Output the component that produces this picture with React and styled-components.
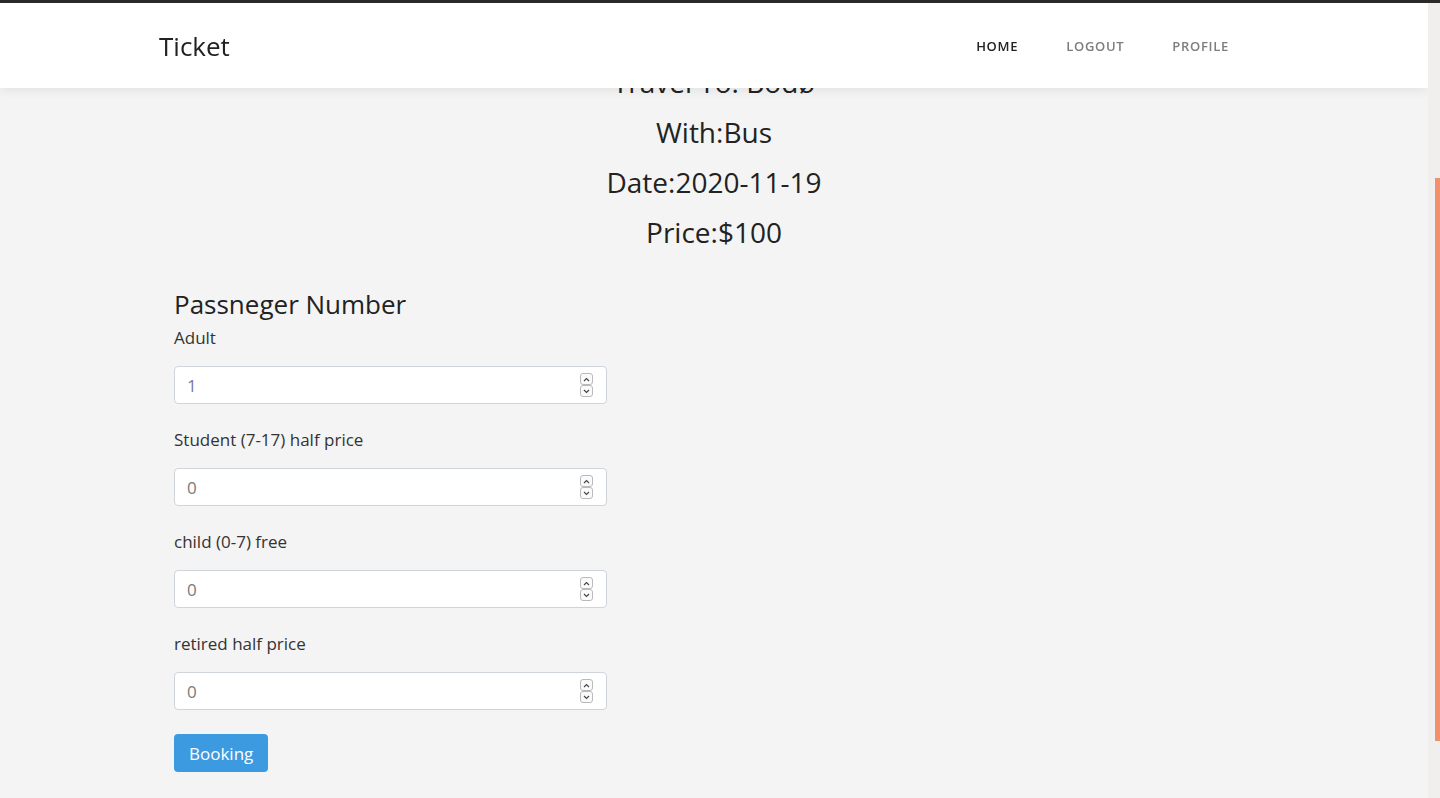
import React, { useLayoutEffect, useRef } from 'react';
import styled, { createGlobalStyle } from 'styled-components';

const FONT = '"Open Sans", "DejaVu Sans", sans-serif';

const GlobalStyle = createGlobalStyle`
    html, body {
        margin: 0;
        padding: 0;
        height: 100%;
        overflow: hidden;
        font-family: ${FONT};
        color: #222;
    }
    * { box-sizing: border-box; }
`;

const Shell = styled.div`
    height: 100vh;
    display: flex;
    flex-direction: column;
`;

const TopStrip = styled.div`
    height: 3px;
    flex: none;
    background: #2a2a2a;
`;

const Body = styled.div`
    flex: 1;
    min-height: 0;
    display: flex;
`;

const Scroller = styled.div`
    flex: 1;
    overflow: hidden;
    background: #f4f4f4;
`;

const ScrollRail = styled.div`
    width: 12px;
    flex: none;
    background: #f0efee;
    display: flex;
    justify-content: flex-end;
`;

const ScrollThumb = styled.div`
    width: 5px;
    margin-top: ${p => p.$top}px;
    height: ${p => p.$size}px;
    background: #f2906b;
`;

const Navbar = styled.header`
    position: sticky;
    top: 0;
    z-index: 5;
    height: 85px;
    background: #fff;
    box-shadow: 0 3px 10px rgba(0, 0, 0, 0.07);
`;

const Container = styled.div`
    width: 1140px;
    margin: 0 auto;
    padding: 0 15px;
    height: 100%;
`;

const NavInner = styled(Container)`
    display: flex;
    align-items: center;
    justify-content: space-between;
`;

const Brand = styled.a`
    font-size: 26px;
    color: #222;
    text-decoration: none;
    line-height: 1;
`;

const NavList = styled.nav`
    display: flex;
    gap: 48px;
    margin-right: 40px;
`;

const NavLink = styled.a`
    font-size: 13px;
    font-weight: 600;
    letter-spacing: 0.7px;
    text-transform: uppercase;
    text-decoration: none;
    color: ${p => (p.$active ? '#222' : '#7d7d7d')};
`;

const Main = styled.main`
    padding: 216px 0 107px;
`;

const Summary = styled.div`
    text-align: center;
`;

const SummaryLine = styled.div`
    font-size: 28px;
    line-height: 50px;
    color: #222;
`;

const Form = styled.form`
    margin: 32px 0 0 15px;
    width: 433px;
    display: flex;
    flex-direction: column;
`;

const Heading = styled.h4`
    margin: 0 0 7px;
    font-size: 26px;
    font-weight: 400;
    line-height: 30px;
`;

const Field = styled.div`
    display: flex;
    flex-direction: column;
    gap: 16px;
    margin-bottom: 24px;
`;

const Label = styled.label`
    font-size: 17px;
    line-height: 24px;
    color: #333;
`;

const InputBox = styled.div`
    height: 38px;
    display: flex;
    align-items: center;
    background: #fff;
    border: 1px solid #ced4da;
    border-radius: 4px;
    padding: 0 13px 0 12px;
`;

const NumberInput = styled.input`
    flex: 1;
    border: 0;
    outline: none;
    background: transparent;
    font-family: ${FONT};
    font-size: 17px;
    padding: 0;
    color: ${p => (p.$tint ? '#7676ad' : '#7a7a7a')};
    appearance: textfield;
    -moz-appearance: textfield;

    &::-webkit-inner-spin-button,
    &::-webkit-outer-spin-button {
        -webkit-appearance: none;
        margin: 0;
    }
`;

const Spinner = styled.div`
    display: flex;
    flex-direction: column;
    width: 13px;
`;

const SpinBtn = styled.span`
    height: 12px;
    display: flex;
    align-items: center;
    justify-content: center;
    border: 1px solid #b9b9b9;
    border-radius: 3px;
    background: #fafafa;
`;

const BookingButton = styled.button`
    align-self: flex-start;
    height: 38px;
    padding: 0 15px;
    border: 0;
    border-radius: 4px;
    background: #3c9ae0;
    color: #fff;
    font-family: ${FONT};
    font-size: 17px;
`;

const Chevron = ({ up }) => (
    <svg width="7" height="5" viewBox="0 0 7 5">
        <path
            d={up ? 'M1 4 L3.5 1.5 L6 4' : 'M1 1 L3.5 3.5 L6 1'}
            fill="none"
            stroke="#444"
            strokeWidth="1.1"
        />
    </svg>
);

const passengers = [
    { id: 'adult', label: 'Adult', value: 1 },
    { id: 'student', label: 'Student (7-17) half price', value: 0 },
    { id: 'child', label: 'child (0-7) free', value: 0 },
    { id: 'retired', label: 'retired half price', value: 0 },
];

const PassengerField = ({ id, label, value }) => (
    <Field>
        <Label htmlFor={id}>{label}</Label>
        <InputBox>
            <NumberInput id={id} type="number" min="0" defaultValue={value} $tint={value > 0} />
            <Spinner>
                <SpinBtn><Chevron up /></SpinBtn>
                <SpinBtn><Chevron /></SpinBtn>
            </Spinner>
        </InputBox>
    </Field>
);

const SCROLL_TOP = 247;

export default function App() {
    const scrollRef = useRef(null);

    useLayoutEffect(() => {
        if (scrollRef.current) scrollRef.current.scrollTop = SCROLL_TOP;
    }, []);

    return (
        <Shell>
            <GlobalStyle />
            <TopStrip />
            <Body>
                <Scroller ref={scrollRef}>
                    <Navbar>
                        <NavInner>
                            <Brand href="#">Ticket</Brand>
                            <NavList>
                                <NavLink href="#" $active>Home</NavLink>
                                <NavLink href="#">Logout</NavLink>
                                <NavLink href="#">Profile</NavLink>
                            </NavList>
                        </NavInner>
                    </Navbar>
                    <Main>
                        <Summary>
                            <SummaryLine>Travel To: Bodø</SummaryLine>
                            <SummaryLine>With:Bus</SummaryLine>
                            <SummaryLine>Date:2020-11-19</SummaryLine>
                            <SummaryLine>Price:$100</SummaryLine>
                        </Summary>
                        <Container>
                            <Form onSubmit={e => e.preventDefault()}>
                                <Heading>Passneger Number</Heading>
                                {passengers.map(p => <PassengerField key={p.id} {...p} />)}
                                <BookingButton type="submit">Booking</BookingButton>
                            </Form>
                        </Container>
                    </Main>
                </Scroller>
                <ScrollRail>
                    <ScrollThumb $top={175} $size={563} />
                </ScrollRail>
            </Body>
        </Shell>
    );
}
